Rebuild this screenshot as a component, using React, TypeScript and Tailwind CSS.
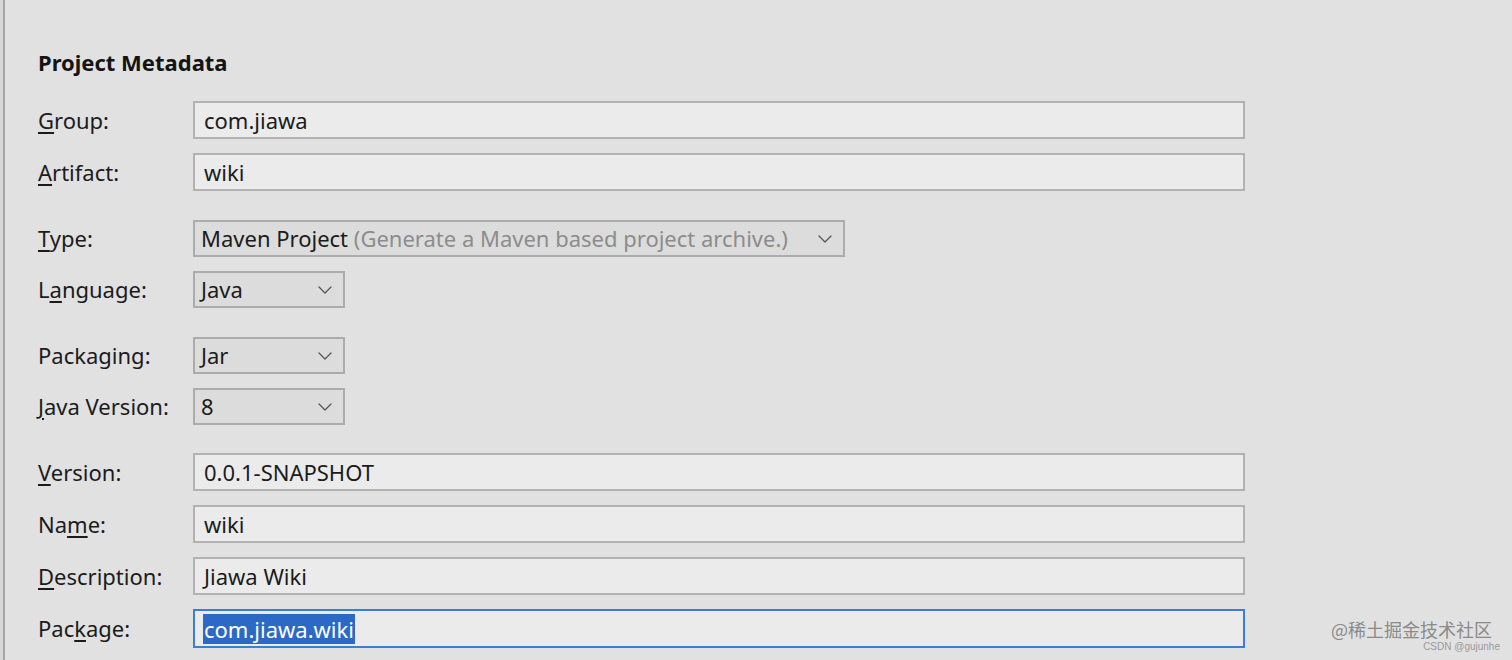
import React from 'react';
import { ChevronDown } from 'lucide-react';

const font = { fontFamily: '"Noto Sans", "Open Sans", sans-serif' };

function Label({ text, u }: { text: string; u?: number }) {
  return (
    <div className="w-[155px] shrink-0 text-[22px] text-[#1b1b1b]">
      {u === undefined
        ? text
        : (
          <>
            {text.slice(0, u)}
            <span className="underline underline-offset-[3px] decoration-[1.5px]">{text[u]}</span>
            {text.slice(u + 1)}
          </>
        )}
    </div>
  );
}

function TextRow({ label, u, value, selected }: { label: string; u?: number; value: string; selected?: boolean }) {
  return (
    <div className="flex items-center">
      <Label text={label} u={u} />
      <div
        className={
          selected
            ? 'w-[1052px] h-[39px] border-2 border-[#3a7fd4] bg-[#ebebeb] flex items-center pl-[8px]'
            : 'w-[1052px] h-[38px] border-2 border-[#b2b2b2] bg-[#ebebeb] flex items-center pl-[9px]'
        }
      >
        {selected ? (
          <span className="text-[22px] leading-[30px] bg-[#2b69c6] text-white px-[1px]">{value}</span>
        ) : (
          <span className="text-[22px] text-[#1b1b1b]">{value}</span>
        )}
      </div>
    </div>
  );
}

function SelectRow({ label, u, value, hint, width }: { label: string; u?: number; value: string; hint?: string; width: string }) {
  return (
    <div className="flex items-center">
      <Label text={label} u={u} />
      <div className={`${width} h-[37px] border-2 border-[#acacac] bg-[#dcdcdc] flex items-center justify-between pl-[6px] pr-[6px]`}>
        <span className="text-[22px] text-[#1b1b1b] whitespace-nowrap">
          {value}
          {hint && <span className="text-[#8c8c8c]"> {hint}</span>}
        </span>
        <ChevronDown className="w-[24px] h-[24px] text-[#555]" strokeWidth={1.3} />
      </div>
    </div>
  );
}

export default function App() {
  return (
    <div className="relative w-[1512px] h-[660px] overflow-hidden bg-[#e1e1e1] flex" style={font}>
      <div className="w-[3px] bg-[#d8d8d8] shrink-0" />
      <div className="w-[2px] bg-[#a6a6a6] shrink-0" />
      <div className="pl-[33px] pt-[47px] flex flex-col">
        <h1 className="text-[22px] leading-[30px] font-bold text-[#141414]">Project Metadata</h1>

        <div className="mt-[24px] flex flex-col gap-[14px]">
          <TextRow label="Group:" u={0} value="com.jiawa" />
          <TextRow label="Artifact:" u={0} value="wiki" />
        </div>

        <div className="mt-[29px] flex flex-col gap-[14px]">
          <SelectRow label="Type:" u={0} value="Maven Project" hint="(Generate a Maven based project archive.)" width="w-[652px]" />
          <SelectRow label="Language:" u={1} value="Java" width="w-[152px]" />
        </div>

        <div className="mt-[29px] flex flex-col gap-[14px]">
          <SelectRow label="Packaging:" value="Jar" width="w-[152px]" />
          <SelectRow label="Java Version:" u={0} value="8" width="w-[152px]" />
        </div>

        <div className="mt-[28px] flex flex-col gap-[14px]">
          <TextRow label="Version:" u={0} value="0.0.1-SNAPSHOT" />
          <TextRow label="Name:" u={2} value="wiki" />
          <TextRow label="Description:" u={0} value="Jiawa Wiki" />
          <TextRow label="Package:" u={3} value="com.jiawa.wiki" selected />
        </div>
      </div>

      <span
        className="absolute right-[20px] bottom-[21px] text-[18px] leading-[20px] text-[#8a8a8a]"
        style={{ fontFamily: '"Noto Sans CJK SC", sans-serif' }}
      >
        @稀土掘金技术社区
      </span>
      <span
        className="absolute right-[12px] bottom-[7px] text-[10px] leading-[12px] text-[#9a9a9a]"
        style={{ fontFamily: '"Liberation Sans", sans-serif' }}
      >
        CSDN @gujunhe
      </span>
    </div>
  );
}
